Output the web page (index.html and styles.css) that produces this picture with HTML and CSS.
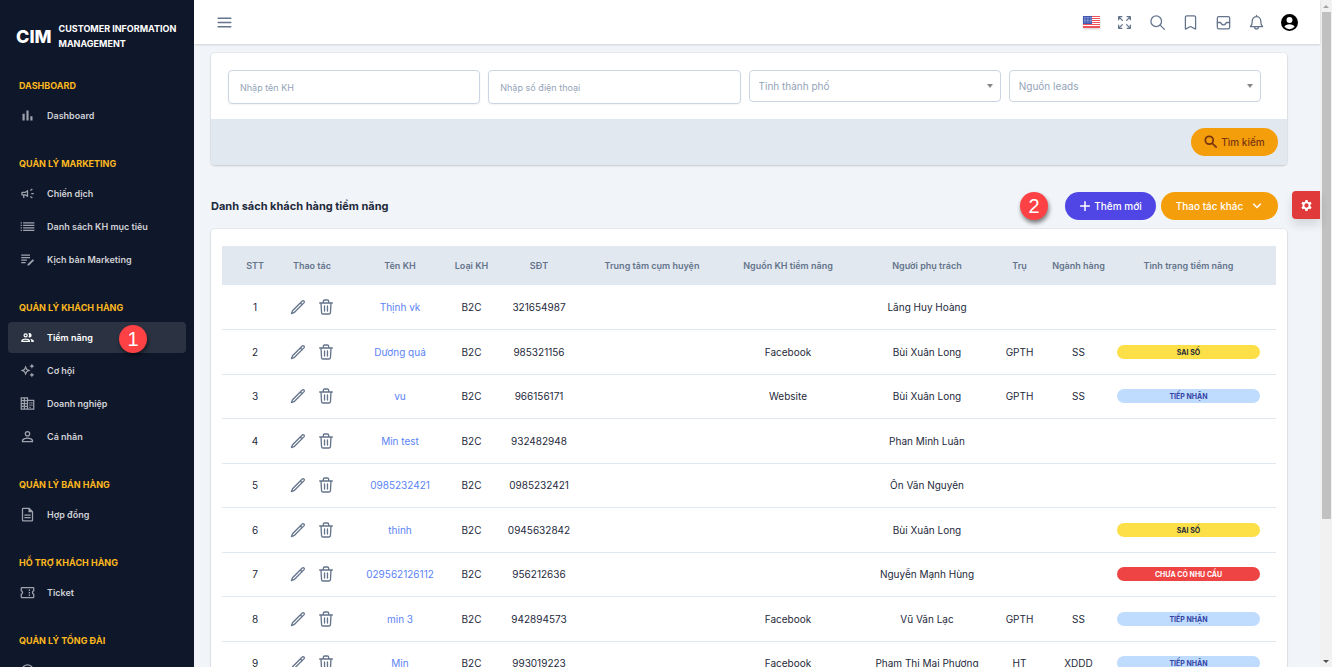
FILE: index.html
```html
<!DOCTYPE html>
<html lang="vi">

<head>
    <meta charset="UTF-8">
    <meta name="viewport" content="width=device-width, initial-scale=1.0">
    <link rel="stylesheet" href="styles.css">
    <title>Danh sách khách hàng tiềm năng</title>
</head>

<body>

    <!-- Icon dùng chung -->
    <svg class="sprite" aria-hidden="true">
        <symbol id="i-pencil" viewBox="0 0 24 24">
            <path d="M16.9 4.5l1.7-1.7a1.9 1.9 0 0 1 2.6 2.6L6.8 19.8a4.5 4.5 0 0 1-1.9 1.1L2.2 21.8l.9-2.7A4.5 4.5 0 0 1 4.2 17.2L16.9 4.5zM15.5 6l2.6 2.6" />
        </symbol>
        <symbol id="i-trash" viewBox="0 0 24 24">
            <path d="M2.5 6h19M4.5 6l.8 14.2A2.3 2.3 0 0 0 7.6 22.5h8.8a2.3 2.3 0 0 0 2.3-2.3L19.5 6M8 6V3.5A2 2 0 0 1 10 1.5h4a2 2 0 0 1 2 2V6M9.8 10.5v7.5M14.2 10.5v7.5" />
        </symbol>
    </svg>

    <div class="layout">
        <aside class="sidebar">
            <div class="brand">
                <span class="brand-logo">CIM</span>
                <span class="brand-name">CUSTOMER INFORMATION MANAGEMENT</span>
            </div>

            <nav class="menu">
                <div class="menu-group">
                    <div class="menu-title">DASHBOARD</div>
                    <a class="menu-item" href="#">
                        <svg viewBox="0 0 24 24"><path d="M4 9h3.5v11H4zM10.3 4h3.4v16h-3.4zM16.5 13H20v7h-3.500z" /></svg>
                        Dashboard
                    </a>
                </div>

                <div class="menu-group">
                    <div class="menu-title">QUẢN LÝ MARKETING</div>
                    <a class="menu-item" href="#">
                        <svg viewBox="0 0 24 24"><path d="M18 11v2h4v-2h-4zm-2 6.600c1 .7 2.200 1.600 3.200 2.400l1.200-1.600c-1-.8-2.200-1.700-3.200-2.400zM20.400 5.600L19.200 4c-1 .8-2.200 1.700-3.200 2.400L17.200 8c1-.7 2.200-1.600 3.200-2.400zM4 9a2 2 0 0 0-2 2v2c0 1.100.9 2 2 2h1v4h2v-4h1l5 3V6L8 9H4zm5.030 1.710L11 9.530v4.940l-1.970-1.180L8.550 13H4v-2h4.550z" /></svg>
                        Chiến dịch
                    </a>
                    <a class="menu-item" href="#">
                        <svg viewBox="0 0 24 24"><path d="M1 5h2v2H1zM1 9h2v2H1zM1 13h2v2H1zM1 17h2v2H1zM5 5h18v2H5zM5 9h18v2H5zM5 13h18v2H5zM5 17h18v2H5z" /></svg>
                        Danh sách KH mục tiêu
                    </a>
                    <a class="menu-item" href="#">
                        <svg viewBox="0 0 24 24"><path d="M2 4h14v2H2zM2 8h14v2H2zM2 12h9v2H2zM2 16h7v2H2zM20.500 11.500l2 2-8.200 8.200H12v-2.200z" /></svg>
                        Kịch bản Marketing
                    </a>
                </div>

                <div class="menu-group">
                    <div class="menu-title">QUẢN LÝ KHÁCH HÀNG</div>
                    <a class="menu-item active" href="#">
                        <svg viewBox="0 0 24 24"><path d="M9 13.750c-2.340 0-7 1.170-7 3.500V19h14v-1.750c0-2.330-4.660-3.500-7-3.500zM4.340 17c.84-.58 2.870-1.250 4.660-1.250s3.820.67 4.660 1.250H4.340zM9 12a3.500 3.500 0 1 0 0-7 3.500 3.500 0 0 0 0 7zm0-5a1.500 1.500 0 1 1 0 3 1.500 1.500 0 0 1 0-3zm7.040 6.810c1.160.84 1.960 1.960 1.960 3.440V19h4v-1.750c0-2.020-3.500-3.170-5.960-3.440zM15 12a3.500 3.500 0 1 0-1.500-6.660 5.480 5.480 0 0 1 0 6.320c.46.22.96.34 1.500.34z" /></svg>
                        Tiềm năng
                        <span class="step step-menu">1</span>
                    </a>
                    <a class="menu-item" href="#">
                        <svg viewBox="0 0 24 24"><path d="M19 9l1.250-2.750L23 5l-2.750-1.250L19 1l-1.250 2.750L15 5l2.750 1.250zM19 15l-1.250 2.750L15 19l2.750 1.250L19 23l1.250-2.750L23 19l-2.750-1.250zM11.500 9.500L9 4 6.500 9.500 1 12l5.500 2.500L9 20l2.500-5.500L17 12zM10 13l-1 2.200L8 13l-2.200-1L8 11l1-2.200L10 11l2.200 1z" /></svg>
                        Cơ hội
                    </a>
                    <a class="menu-item" href="#">
                        <svg viewBox="0 0 24 24"><path fill-rule="evenodd" d="M1 2h12v4h10v16H1zM3 4v2.500h3V4zM8 4v2.500h3V4zM3 8.500v2.500h3V8.500zM8 8.500v2.500h3V8.500zM3 13v2.500h3V13zM8 13v2.500h3V13zM3 17.500V20h3v-2.500zM8 17.500V20h3v-2.500zM13 8v12h8V8zM15 10h2v2h-2zM15 13.500h2v2h-2zM18 10h2v2h-2zM18 13.500h2v2h-2zM15 17h2v2h-2z" /></svg>
                        Doanh nghiệp
                    </a>
                    <a class="menu-item" href="#">
                        <svg viewBox="0 0 24 24"><path fill-rule="evenodd" d="M12 3a4.500 4.500 0 1 0 0 9 4.500 4.500 0 0 0 0-9zm0 2a2.500 2.500 0 1 1 0 5 2.500 2.500 0 0 1 0-5zM12 13.500c-3.500 0-9 1.500-9 5V21h18v-2.500c0-3.500-5.500-5-9-5zm0 2c2.700 0 6.500 1.200 7 3.500H5c.5-2.300 4.300-3.500 7-3.500z" /></svg>
                        Cá nhân
                    </a>
                </div>

                <div class="menu-group">
                    <div class="menu-title">QUẢN LÝ BÁN HÀNG</div>
                    <a class="menu-item" href="#">
                        <svg viewBox="0 0 24 24"><path fill-rule="evenodd" d="M5 1h10l6 6v14a2 2 0 0 1-2 2H5a2 2 0 0 1-2-2V3a2 2 0 0 1 2-2zm0 2v18h14V8.500h-5.500V3zM7 12h10v2H7zM7 16h10v2H7z" /></svg>
                        Hợp đồng
                    </a>
                </div>

                <div class="menu-group">
                    <div class="menu-title">HỖ TRỢ KHÁCH HÀNG</div>
                    <a class="menu-item" href="#">
                        <svg viewBox="0 0 24 24"><path fill-rule="evenodd" d="M3 3h18a2 2 0 0 1 2 2v5a2 2 0 0 0 0 4v5a2 2 0 0 1-2 2H3a2 2 0 0 1-2-2v-5a2 2 0 0 0 0-4V5a2 2 0 0 1 2-2zm0 2v3.500a4 4 0 0 1 0 7V19h18v-3.500a4 4 0 0 1 0-7V5zM14 7h2v2.500h-2zM14 11h2v2.500h-2zM14 15h2v2.500h-2z" /></svg>
                        Ticket
                    </a>
                </div>

                <div class="menu-group">
                    <div class="menu-title">QUẢN LÝ TỔNG ĐÀI</div>
                    <a class="menu-item" href="#" aria-label="Tổng đài">
                        <svg viewBox="0 0 24 24"><path fill-rule="evenodd" d="M12 2a10 10 0 1 0 0 20 10 10 0 0 0 0-20zm0 2a8 8 0 1 1 0 16 8 8 0 0 1 0-16zM8 9h8v2H8z" /></svg>
                    </a>
                </div>
            </nav>
        </aside>

        <div class="main">
            <header class="topbar">
                <button class="icon-btn" type="button" aria-label="Menu">
                    <svg viewBox="0 0 16 16"><path d="M2 4h12M2 8h12M2 12h12" /></svg>
                </button>
                <div class="topbar-actions">
                    <button class="icon-btn" type="button" aria-label="Ngôn ngữ">
                        <svg class="flag" viewBox="0 0 17 12">
                            <path fill="#fff" d="M0 0h17v12H0z" />
                            <path fill="#f0525c" d="M0 0h17v1H0zM0 2h17v1H0zM0 4h17v1H0zM0 6h17v1H0zM0 8h17v1H0zM0 10h17v2H0z" />
                            <path fill="#3f57b0" d="M0 0h9v8H0z" />
                            <path class="stars" d="M1 1.500h8M1 3h8M1 4.500h8M1 6h8" />
                        </svg>
                    </button>
                    <button class="icon-btn" type="button" aria-label="Toàn màn hình">
                        <svg viewBox="0 0 16 16"><path d="M6 6L2.500 2.500M2.500 5.500v-3h3M10 6l3.500-3.500M10.500 2.500h3v3M6 10l-3.500 3.500M2.500 10.500v3h3M10 10l3.500 3.500M13.500 10.500v3h-3" /></svg>
                    </button>
                    <button class="icon-btn" type="button" aria-label="Tìm">
                        <svg viewBox="0 0 16 16"><circle cx="6.800" cy="6.800" r="5" /><path d="M10.500 10.500l4 4" /></svg>
                    </button>
                    <button class="icon-btn" type="button" aria-label="Đánh dấu">
                        <svg viewBox="0 0 16 16"><path d="M3.200 14.200V3A1.300 1.300 0 0 1 4.500 1.700h7A1.300 1.300 0 0 1 12.800 3v11.200L8 11.800z" /></svg>
                    </button>
                    <button class="icon-btn" type="button" aria-label="Hộp thư">
                        <svg viewBox="0 0 16 16"><rect x="2.200" y="2.400" width="11.600" height="11.600" rx="1.500" /><path d="M2.200 8h2.600c.5 0 .8.4 1 .8.400.8 1 1.400 2.200 1.400s1.800-.6 2.200-1.400c.2-.4.5-.8 1-.8h2.600" /></svg>
                    </button>
                    <button class="icon-btn" type="button" aria-label="Thông báo">
                        <svg viewBox="0 0 16 16"><path d="M2.300 11.800c1-.9 1.700-1.800 1.700-5.300a4 4 0 0 1 8 0c0 3.500.7 4.400 1.700 5.300zM6.200 12c0 2.800 3.600 2.800 3.600 0M8 2.500V1.200" /></svg>
                    </button>
                    <button class="icon-btn" type="button" aria-label="Tài khoản">
                        <svg class="avatar" viewBox="0 0 20 20"><path fill-rule="evenodd" d="M10 0a10 10 0 1 0 0 20 10 10 0 0 0 0-20zm0 3.500a3.500 3.500 0 1 1 0 7 3.500 3.500 0 0 1 0-7zM10 12.200c2.500 0 5.500 1.100 6 2.800a7.800 7.800 0 0 1-12 0c.5-1.700 3.500-2.800 6-2.800z" /></svg>
                    </button>
                </div>
            </header>

            <main class="content">
                <form class="card search-card">
                    <div class="search-fields">
                        <input class="field" type="text" placeholder="Nhập tên KH" aria-label="Nhập tên KH">
                        <input class="field" type="text" placeholder="Nhập số điện thoại" aria-label="Nhập số điện thoại">
                        <select class="field field-select" aria-label="Tỉnh thành phố">
                            <option>Tỉnh thành phố</option>
                        </select>
                        <select class="field field-select" aria-label="Nguồn leads">
                            <option>Nguồn leads</option>
                        </select>
                    </div>
                    <div class="search-footer">
                        <button class="btn btn-search" type="button">
                            <svg viewBox="0 0 16 16"><circle cx="6" cy="6" r="4.500" /><path d="M9.500 9.500l5 5" /></svg>
                            Tìm kiếm
                        </button>
                    </div>
                </form>

                <div class="list-header">
                    <h1>Danh sách khách hàng tiềm năng</h1>
                    <span class="step">2</span>
                    <button class="btn btn-add" type="button">
                        <svg viewBox="0 0 16 16"><path d="M8 1.500v13M1.500 8h13" /></svg>
                        Thêm mới
                    </button>
                    <button class="btn btn-more" type="button">
                        Thao tác khác
                        <svg viewBox="0 0 16 16"><path d="M3 5l5 5 5-5" /></svg>
                    </button>
                </div>

                <div class="card table-card">
                    <table class="leads">
                        <colgroup>
                            <col class="c-stt">
                            <col class="c-action">
                            <col class="c-name">
                            <col class="c-type">
                            <col class="c-phone">
                            <col class="c-center">
                            <col class="c-source">
                            <col class="c-owner">
                            <col class="c-tru">
                            <col class="c-branch">
                            <col class="c-status">
                        </colgroup>
                        <thead>
                            <tr>
                                <th>STT</th>
                                <th>Thao tác</th>
                                <th>Tên KH</th>
                                <th>Loại KH</th>
                                <th>SĐT</th>
                                <th>Trung tâm cụm huyện</th>
                                <th>Nguồn KH tiềm năng</th>
                                <th>Người phụ trách</th>
                                <th>Trụ</th>
                                <th>Ngành hàng</th>
                                <th>Tình trạng tiềm năng</th>
                            </tr>
                        </thead>
                        <tbody>
                            <tr>
                                <td>1</td>
                                <td><div class="actions"><button type="button" aria-label="Sửa"><svg><use href="#i-pencil" /></svg></button><button type="button" aria-label="Xóa"><svg><use href="#i-trash" /></svg></button></div></td>
                                <td><a href="#">Thịnh vk</a></td>
                                <td>B2C</td>
                                <td>321654987</td>
                                <td></td>
                                <td></td>
                                <td>Lăng Huy Hoàng</td>
                                <td></td>
                                <td></td>
                                <td></td>
                            </tr>
                            <tr>
                                <td>2</td>
                                <td><div class="actions"><button type="button" aria-label="Sửa"><svg><use href="#i-pencil" /></svg></button><button type="button" aria-label="Xóa"><svg><use href="#i-trash" /></svg></button></div></td>
                                <td><a href="#">Dương quá</a></td>
                                <td>B2C</td>
                                <td>985321156</td>
                                <td></td>
                                <td>Facebook</td>
                                <td>Bùi Xuân Long</td>
                                <td>GPTH</td>
                                <td>SS</td>
                                <td><span class="status status-wrong">SAI SỐ</span></td>
                            </tr>
                            <tr>
                                <td>3</td>
                                <td><div class="actions"><button type="button" aria-label="Sửa"><svg><use href="#i-pencil" /></svg></button><button type="button" aria-label="Xóa"><svg><use href="#i-trash" /></svg></button></div></td>
                                <td><a href="#">vu</a></td>
                                <td>B2C</td>
                                <td>966156171</td>
                                <td></td>
                                <td>Website</td>
                                <td>Bùi Xuân Long</td>
                                <td>GPTH</td>
                                <td>SS</td>
                                <td><span class="status status-new">TIẾP NHẬN</span></td>
                            </tr>
                            <tr>
                                <td>4</td>
                                <td><div class="actions"><button type="button" aria-label="Sửa"><svg><use href="#i-pencil" /></svg></button><button type="button" aria-label="Xóa"><svg><use href="#i-trash" /></svg></button></div></td>
                                <td><a href="#">Min test</a></td>
                                <td>B2C</td>
                                <td>932482948</td>
                                <td></td>
                                <td></td>
                                <td>Phan Minh Luân</td>
                                <td></td>
                                <td></td>
                                <td></td>
                            </tr>
                            <tr>
                                <td>5</td>
                                <td><div class="actions"><button type="button" aria-label="Sửa"><svg><use href="#i-pencil" /></svg></button><button type="button" aria-label="Xóa"><svg><use href="#i-trash" /></svg></button></div></td>
                                <td><a href="#">0985232421</a></td>
                                <td>B2C</td>
                                <td>0985232421</td>
                                <td></td>
                                <td></td>
                                <td>Ôn Văn Nguyên</td>
                                <td></td>
                                <td></td>
                                <td></td>
                            </tr>
                            <tr>
                                <td>6</td>
                                <td><div class="actions"><button type="button" aria-label="Sửa"><svg><use href="#i-pencil" /></svg></button><button type="button" aria-label="Xóa"><svg><use href="#i-trash" /></svg></button></div></td>
                                <td><a href="#">thinh</a></td>
                                <td>B2C</td>
                                <td>0945632842</td>
                                <td></td>
                                <td></td>
                                <td>Bùi Xuân Long</td>
                                <td></td>
                                <td></td>
                                <td><span class="status status-wrong">SAI SỐ</span></td>
                            </tr>
                            <tr>
                                <td>7</td>
                                <td><div class="actions"><button type="button" aria-label="Sửa"><svg><use href="#i-pencil" /></svg></button><button type="button" aria-label="Xóa"><svg><use href="#i-trash" /></svg></button></div></td>
                                <td><a href="#">029562126112</a></td>
                                <td>B2C</td>
                                <td>956212636</td>
                                <td></td>
                                <td></td>
                                <td>Nguyễn Mạnh Hùng</td>
                                <td></td>
                                <td></td>
                                <td><span class="status status-none">CHƯA CÓ NHU CẦU</span></td>
                            </tr>
                            <tr>
                                <td>8</td>
                                <td><div class="actions"><button type="button" aria-label="Sửa"><svg><use href="#i-pencil" /></svg></button><button type="button" aria-label="Xóa"><svg><use href="#i-trash" /></svg></button></div></td>
                                <td><a href="#">min 3</a></td>
                                <td>B2C</td>
                                <td>942894573</td>
                                <td></td>
                                <td>Facebook</td>
                                <td>Vũ Văn Lạc</td>
                                <td>GPTH</td>
                                <td>SS</td>
                                <td><span class="status status-new">TIẾP NHẬN</span></td>
                            </tr>
                            <tr>
                                <td>9</td>
                                <td><div class="actions"><button type="button" aria-label="Sửa"><svg><use href="#i-pencil" /></svg></button><button type="button" aria-label="Xóa"><svg><use href="#i-trash" /></svg></button></div></td>
                                <td><a href="#">Min</a></td>
                                <td>B2C</td>
                                <td>993019223</td>
                                <td></td>
                                <td>Facebook</td>
                                <td>Phạm Thị Mai Phương</td>
                                <td>HT</td>
                                <td>XDDD</td>
                                <td><span class="status status-new">TIẾP NHẬN</span></td>
                            </tr>
                        </tbody>
                    </table>
                </div>
            </main>

            <button class="settings" type="button" aria-label="Cài đặt">
                <svg viewBox="0 0 24 24"><path fill-rule="evenodd" d="M10 2h4l.6 3 1.900 1.100 2.900-1 2 3.500-2.300 2v2.800l2.300 2-2 3.500-2.900-1-1.900 1.100-.6 3h-4l-.6-3-1.900-1.100-2.900 1-2-3.500 2.300-2v-2.800l-2.300-2 2-3.500 2.900 1L9.400 5zm2 6a4 4 0 1 0 0 8 4 4 0 0 0 0-8z" /></svg>
            </button>
        </div>

        <div class="scrollbar">
            <span class="arrow-up"></span>
            <span class="thumb"></span>
            <span class="arrow-down"></span>
        </div>
    </div>

</body>

</html>
```
FILE: styles.css
```css
* {
    box-sizing: border-box;
}

body {
    margin: 0;
    font-family: Inter, "Noto Sans", sans-serif;
    font-size: 10px;
    color: #1e293b;
    background-color: #f1f5f9;
}

button,
input,
select {
    font-family: inherit;
    font-size: inherit;
}

button {
    border: 0;
    padding: 0;
    background: none;
    cursor: pointer;
}

a {
    text-decoration: none;
}

.sprite {
    display: none;
}

.layout {
    display: flex;
    height: 100vh;
    overflow: hidden;
}

/* Sidebar */
.sidebar {
    flex: none;
    width: 194px;
    overflow: hidden;
    background-color: #0f172a;
    color: #fff;
}

.brand {
    display: flex;
    align-items: center;
    gap: 7px;
    padding: 21px 16px 0;
}

.brand-logo {
    font-size: 18px;
    font-weight: 800;
}

.brand-name {
    font-size: 9px;
    font-weight: 700;
    line-height: 15px;
}

.menu {
    display: flex;
    flex-direction: column;
    gap: 23px;
    padding: 25px 8px 0;
}

.menu-group {
    display: flex;
    flex-direction: column;
    gap: 2px;
}

.menu-title {
    padding: 0 11px 2px;
    line-height: 20px;
    font-size: 9px;
    font-weight: 700;
    color: #fbb81f;
}

.menu-item {
    display: flex;
    align-items: center;
    gap: 12px;
    height: 31px;
    padding: 0 12px;
    border-radius: 4px;
    font-size: 9px;
    font-weight: 600;
    color: #cfd1d6;
    position: relative;
}

.menu-item svg {
    width: 15px;
    height: 15px;
    fill: #9fa3ad;
}

.menu-item.active {
    background-color: #2b3343;
    color: #fff;
}

.menu-item.active svg {
    fill: #fff;
}

.step {
    display: flex;
    align-items: center;
    justify-content: center;
    width: 28px;
    height: 28px;
    border-radius: 50%;
    background-color: #fd4144;
    color: #fff;
    font-family: "Liberation Sans", sans-serif;
    font-size: 20px;
    font-weight: 400;
    box-shadow: 1px 3px 4px rgba(0, 0, 0, 0.5);
}

.step-menu {
    position: absolute;
    left: 111px;
    top: 3px;
}

/* Header */
.main {
    flex: 1;
    min-width: 0;
    position: relative;
}

.topbar {
    display: flex;
    align-items: center;
    justify-content: space-between;
    height: 44px;
    padding: 0 22px;
    background-color: #fff;
    box-shadow: 0 1px 2px rgba(0, 0, 0, 0.15);
}

.topbar-actions {
    display: flex;
    gap: 16px;
}

.icon-btn {
    display: flex;
    align-items: center;
    justify-content: center;
    width: 17px;
    height: 17px;
}

.icon-btn svg {
    flex: none;
    width: 17px;
    height: 17px;
    fill: none;
    stroke: #64748b;
    stroke-width: 1.2;
    stroke-linecap: round;
    stroke-linejoin: round;
}

.icon-btn .flag {
    height: 12px;
    stroke: none;
    box-shadow: 0 1px 2px rgba(0, 0, 0, 0.2);
}

.flag .stars {
    stroke: #fff;
    stroke-width: 0.6;
    stroke-linecap: butt;
    stroke-dasharray: 0.7 0.8;
}

.icon-btn .avatar {
    fill: #000;
    stroke: none;
}

/* Content */
.content {
    padding: 9px 33px 0 17px;
}

.card {
    border-radius: 4px;
    background-color: #fff;
    box-shadow: 0 0 0 1px rgba(0, 0, 0, 0.04), 0 1px 2px rgba(0, 0, 0, 0.15);
}

.search-card {
    overflow: hidden;
}

.search-fields {
    display: grid;
    grid-template-columns: repeat(4, 1fr);
    gap: 8px;
    align-items: start;
    padding: 17px 26px 15px 17px;
}

.field {
    width: 100%;
    height: 34px;
    padding: 0 11px;
    border: 1px solid #cbd5e1;
    border-radius: 4px;
    background-color: #fff;
    color: #94a3b8;
    font-size: 9px;
    box-shadow: 0 1px 2px rgba(0, 0, 0, 0.05);
    outline: none;
}

.field::placeholder {
    color: #94a3b8;
    opacity: 1;
}

.field-select {
    height: 32px;
    padding: 0 9px;
    font-size: 10px;
    box-shadow: none;
    appearance: none;
    background-image: url("data:image/svg+xml,%3Csvg xmlns='http://www.w3.org/2000/svg' viewBox='0 0 6 4'%3E%3Cpath fill='%23888' d='M0 0h6L3 4z'/%3E%3C/svg%3E");
    background-repeat: no-repeat;
    background-size: 6px 4px;
    background-position: right 7px center;
}

.search-footer {
    display: flex;
    justify-content: flex-end;
    padding: 9px;
    background-color: #e2e8f0;
}

.btn {
    display: flex;
    align-items: center;
    justify-content: center;
    gap: 3px;
    height: 28px;
    border-radius: 14px;
    font-weight: 500;
    color: #fff;
}

.btn svg {
    width: 12px;
    height: 12px;
    fill: none;
    stroke: currentColor;
    stroke-width: 2;
}

.btn-search {
    width: 87px;
    background-color: #f59e0b;
    color: #78350f;
}

.btn-search svg {
    width: 14px;
    height: 14px;
}

.btn-add {
    width: 91px;
    margin-left: 17px;
    background-color: #4f46e5;
}

.btn-more {
    gap: 8px;
    width: 117px;
    margin-left: 5px;
    background-color: #f59e0b;
}

.list-header {
    display: flex;
    align-items: center;
    padding: 27px 9px 9px 0;
}

.list-header h1 {
    flex: 1;
    margin: 0;
    font-size: 11px;
    font-weight: 700;
}

.table-card {
    padding: 17px 11px;
}

/* Table */
.leads {
    width: 100%;
    table-layout: fixed;
    border-collapse: collapse;
    text-align: center;
    white-space: nowrap;
}

.c-stt {
    width: 50px;
}

.c-action {
    width: 80px;
}

.c-name {
    width: 96px;
}

.c-type {
    width: 47px;
}

.c-phone {
    width: 88px;
}

.c-center {
    width: 138px;
}

.c-source {
    width: 134px;
}

.c-owner {
    width: 144px;
}

.c-tru {
    width: 41px;
}

.c-branch {
    width: 77px;
}

.c-status {
    width: 159px;
}

.leads th {
    height: 39px;
    padding: 0;
    background-color: #e2e8f0;
    font-size: 9px;
    font-weight: 600;
    color: #64748b;
}

.leads td {
    height: 44px;
    padding: 0;
    border-bottom: 1px solid #e2e8f0;
}

.leads tr:nth-child(even) td {
    height: 45px;
}

.leads th:first-child,
.leads td:first-child {
    padding-left: 16px;
}

.leads th:last-child,
.leads td:last-child {
    padding-right: 16px;
}

.leads a {
    color: #5b83f5;
}

.actions {
    display: flex;
    justify-content: center;
    gap: 12px;
}

.actions button,
.actions svg {
    display: block;
    width: 16px;
    height: 16px;
}

.actions svg {
    fill: none;
    stroke: #64748b;
    stroke-width: 2;
    stroke-linecap: round;
    stroke-linejoin: round;
}

.status {
    display: block;
    height: 14px;
    border-radius: 7px;
    line-height: 15px;
    font-size: 7px;
    font-weight: 700;
}

.status-wrong {
    background-color: #fde047;
    color: #1e293b;
}

.status-new {
    background-color: #bfdbfe;
    color: #3344a5;
}

.status-none {
    background-color: #ef4444;
    color: #fff;
}

.settings {
    display: flex;
    align-items: center;
    justify-content: center;
    width: 28px;
    height: 28px;
    border-radius: 4px 0 0 4px;
    background-color: #e03a3a;
    box-shadow: 0 6px 10px rgba(0, 0, 0, 0.12);
    position: absolute;
    right: 0;
    top: 191px;
}

.settings svg {
    width: 13px;
    height: 13px;
    fill: #fff;
}

/* Scrollbar */
.scrollbar {
    display: flex;
    flex: none;
    flex-direction: column;
    align-items: center;
    width: 12px;
    padding: 5px 0 4px;
    background-color: #f1f1f1;
}

.thumb {
    width: 9px;
    height: 77%;
    margin-top: 4px;
    background-color: #c1c1c1;
}

.arrow-up,
.arrow-down {
    border: 3px solid transparent;
}

.arrow-up {
    border-top: 0;
    border-bottom-color: #a3a3a3;
}

.arrow-down {
    margin-top: auto;
    border-bottom: 0;
    border-top-color: #505050;
}
```
